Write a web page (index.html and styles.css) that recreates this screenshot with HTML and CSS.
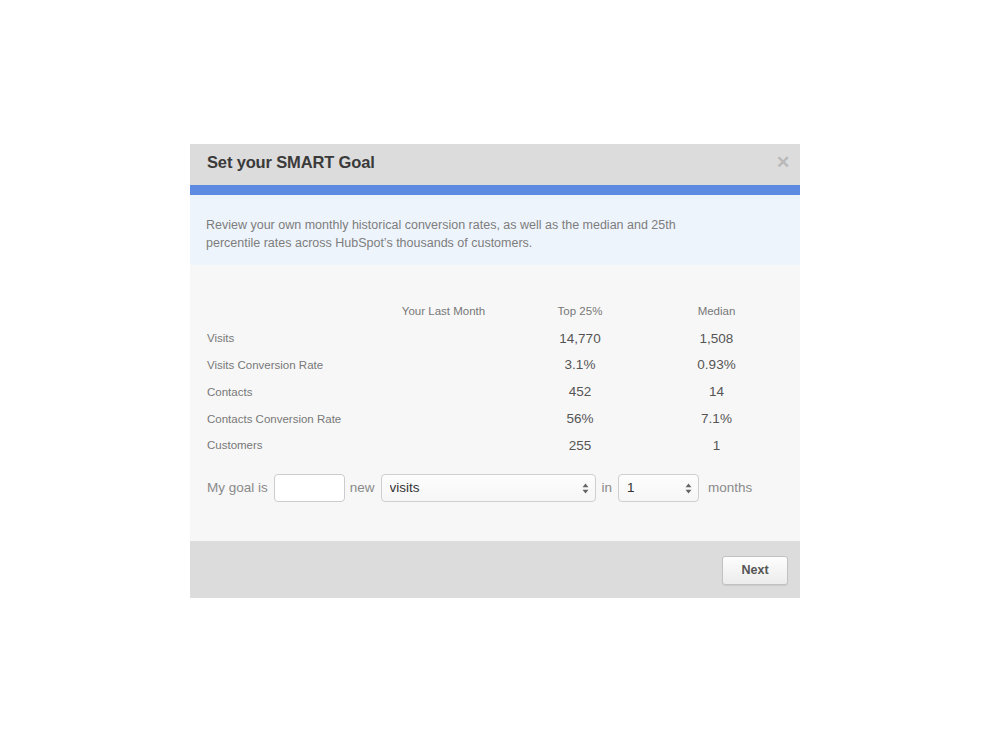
FILE: index.html
```html
<!DOCTYPE html>
<html>
<head>
<meta charset="utf-8">
<link rel="stylesheet" href="styles.css">
</head>
<body>
<div class="page">
  <div class="modal">
    <div class="modal-header">
      <h1 class="title">Set your SMART Goal</h1>
      <span class="close">&#x2715;</span>
    </div>
    <div class="accent"></div>
    <div class="intro">
      <p>Review your own monthly historical conversion rates, as well as the median and 25th<br>percentile rates across HubSpot’s thousands of customers.</p>
    </div>
    <div class="modal-body">
      <table class="stats">
        <thead>
          <tr><th class="c-label"></th><th class="c-col">Your Last Month</th><th class="c-col c-top">Top 25%</th><th class="c-col">Median</th></tr>
        </thead>
        <tbody>
          <tr><td class="c-label">Visits</td><td></td><td>14,770</td><td>1,508</td></tr>
          <tr><td class="c-label">Visits Conversion Rate</td><td></td><td>3.1%</td><td>0.93%</td></tr>
          <tr><td class="c-label">Contacts</td><td></td><td>452</td><td>14</td></tr>
          <tr><td class="c-label">Contacts Conversion Rate</td><td></td><td>56%</td><td>7.1%</td></tr>
          <tr><td class="c-label">Customers</td><td></td><td>255</td><td>1</td></tr>
        </tbody>
      </table>
      <div class="goal">
        <span class="goal-text">My goal is</span>
        <input class="goal-input" type="text">
        <span class="goal-text">new</span>
        <span class="select-wrap wide">
          <select class="select"><option>visits</option></select>
          <svg class="arrows" width="7" height="11" viewBox="0 0 7 11"><path d="M3.5 0.5 L6.5 4.2 L0.5 4.2 Z M3.5 10.5 L6.5 6.8 L0.5 6.8 Z" fill="#666"/></svg>
        </span>
        <span class="goal-text">in</span>
        <span class="select-wrap narrow">
          <select class="select"><option>1</option></select>
          <svg class="arrows" width="7" height="11" viewBox="0 0 7 11"><path d="M3.5 0.5 L6.5 4.2 L0.5 4.2 Z M3.5 10.5 L6.5 6.8 L0.5 6.8 Z" fill="#666"/></svg>
        </span>
        <span class="goal-text months">months</span>
      </div>
    </div>
    <div class="modal-footer">
      <button class="btn">Next</button>
    </div>
  </div>
</div>
</body>
</html>
```
FILE: styles.css
```css
* { box-sizing: border-box; }
html, body { margin: 0; padding: 0; background: #fff; }
body { font-family: "Liberation Sans", Arial, sans-serif; }
.page { padding: 144px 0 0 190px; }
.modal { width: 610px; background: #f7f7f7; }
.modal-header {
  height: 41px; background: #dcdcdc;
  display: flex; align-items: center; justify-content: space-between;
  padding: 0 10px 4px 17px;
}
.title { margin: 0; font-size: 16.5px; font-weight: bold; color: #3a3a3a; letter-spacing: -0.15px; }
.close { color: #b9b9b9; font-size: 17px; font-weight: bold; line-height: 1; }
.accent { height: 10px; background: #5f8ae2; }
.intro { background: #eef4fc; height: 70px; padding: 21px 17px 0 16px; }
.intro p { margin: 0; font-size: 12.5px; line-height: 18px; color: #7d7d7d; }
.modal-body { padding: 33px 17px 39px 17px; }
.stats { border-collapse: collapse; width: 576px; table-layout: fixed; }
.stats th, .stats td { padding: 0; height: 26.8px; text-align: center; }
.stats th { font-weight: normal; font-size: 11.5px; color: #777; }
.stats td { font-size: 13.5px; color: #555; }
.stats .c-label { width: 170px; text-align: left; font-size: 11.5px; color: #777; }
.stats th.c-col { width: 133px; }
.stats th.c-top { width: 140px; }
.goal { margin-top: 15px; display: flex; align-items: center; height: 28px; }
.goal-text { font-size: 13.5px; color: #8a8a8a; margin-right: 6px; }
.months { margin-left: 3px; }
.goal-input {
  width: 71px; height: 28px; border: 1px solid #ccc; border-radius: 4px;
  background: #fff; margin: 0 5px 0 0; padding: 0 6px; font: inherit;
}
.select-wrap { position: relative; display: inline-block; height: 28px; margin-right: 6px; }
.select-wrap.wide { width: 215px; }
.select-wrap.narrow { width: 81px; margin-right: 6px; }
.select {
  -webkit-appearance: none; appearance: none;
  width: 100%; height: 28px; border: 1px solid #cfcfcf; border-radius: 4px;
  background: linear-gradient(#fdfdfd, #f6f6f6);
  font-family: "Liberation Sans", Arial, sans-serif; font-size: 13.5px; color: #333;
  padding: 0 8px; margin: 0;
}
.arrows { position: absolute; right: 7px; top: 9px; pointer-events: none; }
.modal-footer {
  height: 57px; background: #dcdcdc;
  display: flex; justify-content: flex-end; align-items: flex-start;
  padding: 15px 12px 0 0;
}
.btn {
  width: 66px; height: 29px; border: 1px solid #c2c2c2; border-radius: 3px;
  background: linear-gradient(#fdfdfd, #ececec);
  font-family: "Liberation Sans", Arial, sans-serif; font-size: 12.5px; font-weight: bold; color: #555;
  box-shadow: 0 1px 1px rgba(0,0,0,0.08);
}
```
